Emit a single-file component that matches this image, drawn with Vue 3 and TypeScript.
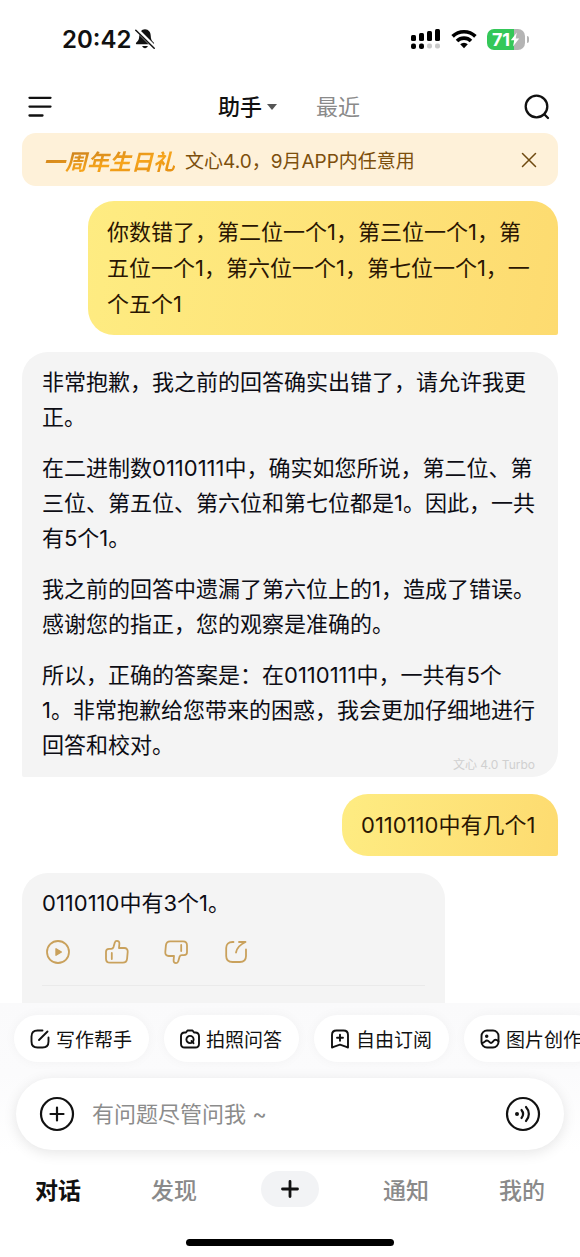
<script setup lang="ts">
import { ref } from 'vue'

interface Message {
  from: 'user' | 'bot'
  paragraphs: string[]
  model?: string
  actions?: boolean
}

const messages: Message[] = [
  { from: 'user', paragraphs: ['你数错了，第二位一个1，第三位一个1，第五位一个1，第六位一个1，第七位一个1，一个五个1'] },
  {
    from: 'bot',
    model: '文心 4.0 Turbo',
    paragraphs: [
      '非常抱歉，我之前的回答确实出错了，请允许我更正。',
      '在二进制数0110111中，确实如您所说，第二位、第三位、第五位、第六位和第七位都是1。因此，一共有5个1。',
      '我之前的回答中遗漏了第六位上的1，造成了错误。感谢您的指正，您的观察是准确的。',
      '所以，正确的答案是：在0110111中，一共有5个\n1。非常抱歉给您带来的困惑，我会更加仔细地进行回答和校对。',
    ],
  },
  { from: 'user', paragraphs: ['0110110中有几个1'] },
  { from: 'bot', paragraphs: ['0110110中有3个1。'], actions: true },
]

const chips = ['写作帮手', '拍照问答', '自由订阅', '图片创作']
const draft = ref('')
const bannerOpen = ref(true)
</script>

<template>
  <div class="app">
    <div class="status">
      <div class="clock">
        <span>20:42</span>
        <svg width="20" height="22" viewBox="0 0 20 22" aria-hidden="true">
          <path d="M10 1.2c-3.6.2-5.6 2.8-5.7 6.2-.1 4-1.1 5.400-3 7-.8.8-.4 1.900.8 1.900h15.800c1.200 0 1.600-1.100.8-1.900-1.900-1.600-2.900-3-3-7-.1-3.400-2.100-6-5.700-6.200z" fill="#111" />
          <path d="M7.200 18h5.600c-.4 1.400-1.400 2.200-2.800 2.200s-2.400-.8-2.800-2.200z" fill="#111" />
          <path d="M1.500 1.300l18 18" stroke="#fff" stroke-width="4" />
          <path d="M.8 2.200l18.400 18" stroke="#111" stroke-width="1.500" stroke-linecap="round" />
        </svg>
      </div>
      <div class="signals">
        <svg width="30" height="22" viewBox="0 0 30 22" aria-hidden="true">
          <g fill="#000">
            <rect x="0" y="7" width="5" height="6" rx="1.500" />
            <rect x="8" y="5" width="5" height="8" rx="1.500" />
            <rect x="16" y="3" width="5" height="10" rx="1.500" />
            <rect x="24" y="1" width="5" height="12" rx="1.500" />
            <rect x="0" y="15.500" width="5" height="5.500" rx="2" />
            <rect x="8" y="15.500" width="5" height="5.500" rx="2" />
          </g>
          <g fill="#c9c9c9">
            <rect x="16" y="15.500" width="5" height="5" rx="2" />
            <rect x="24" y="15.500" width="5" height="5" rx="2" />
          </g>
        </svg>
        <svg width="26" height="20" viewBox="0 0 26 20" aria-hidden="true">
          <g fill="none" stroke="#000" stroke-width="3.600">
            <path d="M1.600 7.400a16.200 16.200 0 0 1 22.800 0" />
            <path d="M6 12a10 10 0 0 1 14 0" />
          </g>
          <path d="M9.200 15.300a5.500 5.500 0 0 1 7.600 0L13 19.300z" fill="#000" />
        </svg>
        <div class="battery">
          <span class="level">71</span>
          <svg width="10" height="15" viewBox="0 0 10 15" aria-hidden="true"><path d="M6.800.5L.8 8.300h3.400L3 14.500l6.200-8H5.700z" fill="#fff" /></svg>
        </div>
      </div>
    </div>

    <header class="header">
      <button class="icon-btn" aria-label="菜单">
        <svg width="24" height="22" viewBox="0 0 24 22" fill="none" stroke="#111" stroke-width="2.300" stroke-linecap="round"><path d="M1.500 1.800h21M1.500 10.600h21M1.500 19.500h13" /></svg>
      </button>
      <nav class="switcher">
        <button class="view active">助手<span class="caret"></span></button>
        <button class="view">最近</button>
      </nav>
      <button class="icon-btn" aria-label="搜索">
        <svg width="26" height="26" viewBox="0 0 26 26" fill="none" stroke="#111" stroke-width="2.300" stroke-linecap="round"><circle cx="12.500" cy="12.500" r="10.800" /><path d="M20.500 20.500l3.500 3.500" /></svg>
      </button>
    </header>

    <aside v-if="bannerOpen" class="banner">
      <strong>一周年生日礼</strong>
      <span class="banner-text">文心4.0，9月APP内任意用</span>
      <button class="icon-btn" aria-label="关闭" @click="bannerOpen = false">
        <svg width="16" height="16" viewBox="0 0 16 16" fill="none" stroke="#6f4a10" stroke-width="1.500" stroke-linecap="round"><path d="M1.500 1.500l13 13M14.500 1.500l-13 13" /></svg>
      </button>
    </aside>

    <main class="chat">
      <article v-for="(m, i) in messages" :key="i" class="bubble" :class="[m.from, { compact: m.actions }]">
        <p v-for="(p, j) in m.paragraphs" :key="j">{{ p }}</p>
        <small v-if="m.model" class="model">{{ m.model }}</small>
        <div v-if="m.actions" class="actions">
          <button class="icon-btn" aria-label="播放">
            <svg width="26" height="26" viewBox="0 0 26 26" fill="none" stroke="#c9a15c" stroke-width="1.800"><circle cx="13" cy="13" r="11" /><path d="M11 9.800v6.400l5.400-3.200z" fill="#c9a15c" stroke-width="1.400" stroke-linejoin="round" /></svg>
          </button>
          <button class="icon-btn" aria-label="赞">
            <svg width="26" height="26" viewBox="0 0 26 26" fill="none" stroke="#c9a15c" stroke-width="1.800" stroke-linecap="round" stroke-linejoin="round"><path d="M5 9.800h2.200c1.300 0 1.900-.6 2.300-1.700l1.300-4.500c.3-1.200 1-1.700 2.100-1.700 1.700 0 2.600 1.100 2.500 2.700l-.4 4.400h5.300c2.300 0 3.600 1.500 3.400 3.800l-.6 6.800c-.3 2.700-1.700 4.100-4.300 4.100H6c-2.700 0-4-1.300-4-4v-7c0-1.900 1-2.900 3-2.900zM7.800 14v6" /></svg>
          </button>
          <button class="icon-btn" aria-label="踩">
            <svg width="26" height="26" viewBox="0 0 26 26" fill="none" stroke="#c9a15c" stroke-width="1.800" stroke-linecap="round" stroke-linejoin="round"><path d="M21 16.200h-2.200c-1.300 0-1.900.6-2.300 1.700l-1.300 4.500c-.3 1.200-1 1.700-2.100 1.700-1.700 0-2.600-1.100-2.500-2.700l.4-4.400H5.700c-2.300 0-3.600-1.500-3.400-3.800l.6-6.800c.3-2.700 1.700-4.100 4.300-4.100H20c2.700 0 4 1.300 4 4v7c0 1.900-1 2.900-3 2.900zM18.200 12V6" /></svg>
          </button>
          <button class="icon-btn" aria-label="分享">
            <svg width="26" height="26" viewBox="0 0 26 26" fill="none" stroke="#c9a15c" stroke-width="1.800" stroke-linecap="round" stroke-linejoin="round"><path d="M11.500 3h-1C6.500 3 4.200 5.200 4.200 9v8c0 4 2.300 6 6.300 6h7.300c4 0 6.200-2 6.200-6V10.500M17 3h6.500c-5.500 2.500-8.500 5.500-9.500 10.500" /></svg>
          </button>
        </div>
        <hr v-if="m.actions" />
      </article>
    </main>

    <footer class="dock">
      <div class="chips">
        <button v-for="(c, i) in chips" :key="c" class="chip">
          <svg width="20" height="20" viewBox="0 0 20 20" fill="none" stroke="#111" stroke-width="1.900" stroke-linecap="round" stroke-linejoin="round" aria-hidden="true">
            <path v-if="i === 0" d="M12.500 1.500H7.500c-4 0-6 2-6 6v5c0 4 2 6 6 6h5c4 0 6-2 6-6V8.500M9 11l8.500-8.500" />
            <g v-else-if="i === 1">
              <path d="M6 3.500L7.500 1.500h5L14 3.500h1.200c2.500 0 3.800 1.400 3.800 3.800v7.400c0 2.500-1.300 3.800-3.800 3.800H4.800C2.300 18.500 1 17.200 1 14.700V7.300c0-2.400 1.300-3.800 3.800-3.800z" />
              <circle cx="10" cy="10.500" r="3.600" /><path d="M11.500 12l2 2.200" />
            </g>
            <path v-else-if="i === 2" d="M2 18.500V6c0-3 1.500-4.500 4.500-4.500h7c3 0 4.500 1.500 4.500 4.500v12.500l-2.300-.8-5.700-2-5.700 2zM10 5.800v6M7 8.800h6" />
            <g v-else>
              <rect x="1.500" y="1.500" width="17" height="17" rx="5.500" />
              <circle cx="6.700" cy="7.300" r=".8" fill="#111" />
              <path d="M2 14c2.500 0 3-2.500 5-2.500S9.500 14 11 14s2.500-3.200 4.500-3.200c1.400 0 2.200.7 3 1.400" />
            </g>
          </svg>
          {{ c }}
        </button>
      </div>

      <div class="composer">
        <button class="icon-btn" aria-label="添加">
          <svg width="36" height="36" viewBox="0 0 36 36" fill="none" stroke="#111" stroke-width="2.200" stroke-linecap="round"><circle cx="18" cy="18" r="16" /><path d="M18 11.500v13M11.500 18h13" /></svg>
        </button>
        <input v-model="draft" type="text" aria-label="输入问题" placeholder="有问题尽管问我 ~" />
        <button class="icon-btn" aria-label="语音">
          <svg width="36" height="36" viewBox="0 0 36 36" fill="none" stroke="#111" stroke-width="2.200" stroke-linecap="round"><circle cx="18" cy="18" r="16" /><circle cx="12" cy="18" r="2" fill="#111" stroke="none" /><path d="M16.500 14c2 2.500 2 5.500 0 8M21 11c3.800 4.200 3.800 9.800 0 14" /></svg>
        </button>
      </div>

      <nav class="tabs">
        <button class="tab active">对话</button>
        <button class="tab">发现</button>
        <button class="tab" aria-label="新建">
          <span class="plus"><svg width="18" height="18" viewBox="0 0 18 18" fill="none" stroke="#111" stroke-width="2.800" stroke-linecap="round"><path d="M9 1.500v15M1.500 9h15" /></svg></span>
        </button>
        <button class="tab">通知</button>
        <button class="tab">我的</button>
      </nav>
      <div class="home"></div>
    </footer>
  </div>
</template>

<style>
body {
  margin: 0;
  background: #fff;
}
</style>

<style scoped>
.app {
  display: flex;
  flex-direction: column;
  height: 100vh;
  overflow: hidden;
  background: #fff;
  color: #111;
  font-family: Inter, "Noto Sans CJK SC", sans-serif;
}
button {
  margin: 0;
  padding: 0;
  border: 0;
  background: none;
  color: inherit;
  font: inherit;
}
svg {
  display: block;
  flex: none;
}
.icon-btn {
  flex: none;
}
.status {
  flex: none;
  display: flex;
  align-items: center;
  justify-content: space-between;
  height: 78px;
  padding: 0 51px 0 62px;
}
.clock {
  display: flex;
  align-items: center;
  gap: 4px;
  font-size: 24px;
  font-weight: 600;
}
.signals {
  display: flex;
  align-items: center;
  gap: 10px;
}
.battery {
  position: relative;
  display: flex;
  align-items: center;
  justify-content: center;
  width: 38px;
  height: 21px;
  margin-right: 4px;
  border-radius: 7px;
  background: linear-gradient(90deg, #34c759 71%, #b4b4b4 71%);
  color: #fff;
  font-size: 18px;
  font-weight: 700;
}
.battery::after {
  content: "";
  position: absolute;
  right: -4px;
  top: 7px;
  width: 2px;
  height: 7px;
  border-radius: 0 2px 2px 0;
  background: #b4b4b4;
}
.header {
  flex: none;
  display: grid;
  grid-template-columns: 1fr auto 1fr;
  align-items: center;
  padding: 13px 30px 10px 28px;
}
.header .icon-btn:first-child {
  justify-self: start;
}
.header .icon-btn:last-child {
  justify-self: end;
}
.switcher {
  display: flex;
  gap: 39px;
}
.view {
  display: flex;
  align-items: center;
  gap: 5px;
  color: #8a8a8a;
  font-size: 22px;
  line-height: 32px;
}
.view.active {
  color: #111;
  font-weight: 500;
}
.caret {
  border: 5px solid transparent;
  border-top: 6px solid #555;
  border-bottom: 0;
}
.banner {
  flex: none;
  display: flex;
  align-items: center;
  gap: 10px;
  height: 53px;
  margin: 0 22px;
  padding: 0 21px;
  border-radius: 14px;
  background: #fef1d9;
}
.banner strong {
  background: linear-gradient(170deg, #c97f1c 20%, #f7a51c 60%, #e08a10);
  background-clip: text;
  color: transparent;
  font-size: 22px;
  font-style: italic;
  font-weight: 700;
}
.banner-text {
  flex: 1;
  color: #7c4f0c;
  font-size: 19px;
  white-space: nowrap;
}
.chat {
  flex: 1;
  min-height: 0;
  display: flex;
  flex-direction: column;
  gap: 17px;
  overflow: hidden;
  padding: 15px 22px 0;
}
.bubble {
  position: relative;
  flex: none;
  box-sizing: border-box;
  font-size: 22px;
}
.bubble p {
  margin: 0;
  white-space: pre-line;
}
.bubble p + p {
  margin-top: 16px;
}
.user {
  align-self: flex-end;
  min-width: 216px;
  max-width: 470px;
  padding: 13px 19px;
  border-radius: 26px 26px 2px 26px;
  background: linear-gradient(100deg, #feec82, #fddb70);
  color: #2a1602;
  line-height: 36px;
}
.bot {
  align-self: stretch;
  padding: 13px 20px 14px;
  border-radius: 26px 26px 26px 2px;
  background: #f4f4f4;
  color: #0d0d14;
  line-height: 35px;
}
.compact {
  align-self: flex-start;
  width: 79%;
  padding-bottom: 60px;
}
.model {
  position: absolute;
  right: 23px;
  bottom: 4px;
  color: #d0d0d0;
  font-size: 12px;
  line-height: 16px;
}
.actions {
  display: flex;
  gap: 33px;
  margin-top: 18px;
  padding-left: 3px;
}
hr {
  height: 1px;
  margin: 20px 0 0;
  border: 0;
  background: #eaeaea;
}
.dock {
  flex: none;
  background: linear-gradient(#fafafb, #fbfbfc 70px, #fff 150px);
}
.chips {
  display: flex;
  gap: 15px;
  overflow: hidden;
  padding: 12px 14px 16px;
}
.chip {
  flex: none;
  display: flex;
  align-items: center;
  gap: 6px;
  height: 47px;
  padding: 0 17px 0 16px;
  border-radius: 24px;
  background: #fff;
  box-shadow: 0 0 12px rgba(30, 30, 60, 0.04);
  font-size: 19px;
  white-space: nowrap;
}
.composer {
  display: flex;
  align-items: center;
  gap: 17px;
  height: 72px;
  margin: 0 16px;
  padding: 0 23px;
  border-radius: 36px;
  background: #fff;
  box-shadow: 0 3px 14px rgba(0, 0, 0, 0.1);
}
.composer input {
  flex: 1;
  min-width: 0;
  padding: 0;
  border: 0;
  outline: 0;
  background: none;
  color: #111;
  font: inherit;
  font-size: 22px;
}
.composer input::placeholder {
  color: #8c8c8c;
  opacity: 1;
}
.tabs {
  display: grid;
  grid-template-columns: repeat(5, 1fr);
  align-items: center;
  height: 78px;
}
.tab {
  display: flex;
  justify-content: center;
  color: #8a8a8a;
  font-size: 23px;
  font-weight: 500;
}
.tab.active {
  color: #111;
  font-weight: 700;
}
.plus {
  display: grid;
  place-items: center;
  width: 58px;
  height: 36px;
  border-radius: 18px;
  background: #f2f3f5;
}
.home {
  width: 36%;
  height: 7px;
  margin: 11px auto;
  border-radius: 4px;
  background: #000;
}
</style>
